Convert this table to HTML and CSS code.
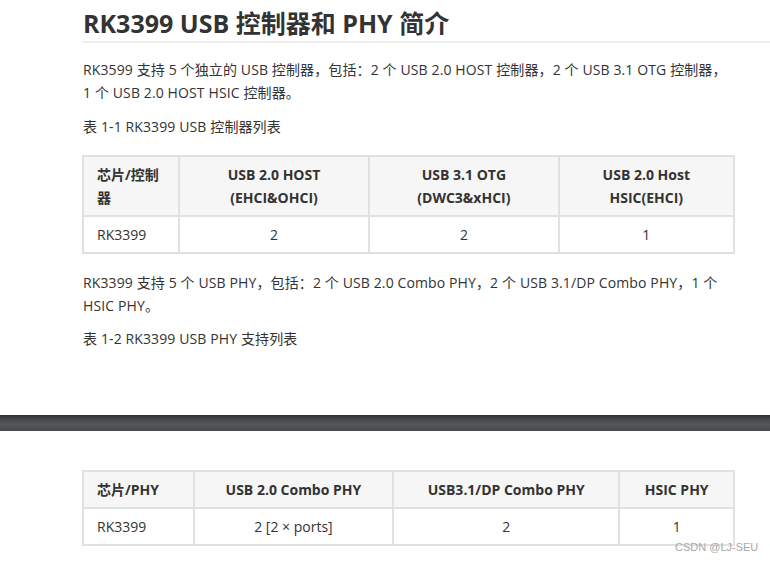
FILE: index.html
```html
<!DOCTYPE html>
<html lang="zh-CN">
<head>
<meta charset="utf-8">
<title>RK3399 USB 控制器和 PHY 简介</title>
<link rel="stylesheet" href="styles.css">
</head>
<body>
<main class="page">
  <section class="part part-top">
    <h1 class="title">RK3399 USB 控制器和 PHY 简介</h1>
    <p class="text first">RK3599 支持 5 个独立的 USB 控制器，包括：2 个 USB 2.0 HOST 控制器，2 个 USB 3.1 OTG 控制器，<br>1 个 USB 2.0 HOST HSIC 控制器。</p>
    <p class="text caption">表 1-1 RK3399 USB 控制器列表</p>
    <table class="grid">
      <colgroup>
        <col class="c1-a"><col class="c1-b"><col class="c1-c"><col class="c1-d">
      </colgroup>
      <thead>
        <tr>
          <th class="left">芯片/控制<br>器</th>
          <th>USB 2.0 HOST<br>(EHCI&amp;OHCI)</th>
          <th>USB 3.1 OTG<br>(DWC3&amp;xHCI)</th>
          <th>USB 2.0 Host<br>HSIC(EHCI)</th>
        </tr>
      </thead>
      <tbody>
        <tr>
          <td class="left">RK3399</td>
          <td>2</td>
          <td>2</td>
          <td>1</td>
        </tr>
      </tbody>
    </table>
    <p class="text after-table">RK3399 支持 5 个 USB PHY，包括：2 个 USB 2.0 Combo PHY，2 个 USB 3.1/DP Combo PHY，1 个 HSIC PHY。</p>
    <p class="text caption caption-last">表 1-2 RK3399 USB PHY 支持列表</p>
  </section>
  <div class="divider"></div>
  <section class="part part-bottom">
    <table class="grid">
      <colgroup>
        <col class="c2-a"><col class="c2-b"><col class="c2-c"><col class="c2-d">
      </colgroup>
      <thead>
        <tr>
          <th class="left">芯片/PHY</th>
          <th>USB 2.0 Combo PHY</th>
          <th>USB3.1/DP Combo PHY</th>
          <th>HSIC PHY</th>
        </tr>
      </thead>
      <tbody>
        <tr>
          <td class="left">RK3399</td>
          <td>2 [2 × ports]</td>
          <td>2</td>
          <td>1</td>
        </tr>
      </tbody>
    </table>
  </section>
  <div class="watermark">CSDN @LJ-SEU</div>
</main>
</body>
</html>
```
FILE: styles.css
```css
html, body {
  margin: 0;
  padding: 0;
  background: #ffffff;
}

.page {
  position: relative;
  width: 770px;
  height: 562px;
  overflow: hidden;
  font-family: "Open Sans", "Noto Sans CJK SC", sans-serif;
  color: #333333;
}

.part {
  padding-left: 82px;
}

.part-top {
  padding-top: 8px;
}

.title {
  margin: 0;
  padding: 0 0 3px 1px;
  font-size: 25px;
  line-height: 30px;
  font-weight: 700;
  color: #333333;
  border-bottom: 2px solid #eeeeee;
}

.text {
  width: 652px;
  margin: 0;
  padding-left: 1px;
  font-size: 14px;
  line-height: 23px;
  letter-spacing: 0.12px;
}

.first {
  margin-top: 15px;
}

.caption {
  margin-top: 11px;
}

.caption-last {
  margin-top: 10px;
}

.after-table {
  margin-top: 17px;
}

.grid {
  width: 653px;
  border-collapse: collapse;
  font-size: 14px;
  line-height: 23px;
  color: #333333;
}

.part-top .grid {
  margin-top: 17px;
}

.grid th,
.grid td {
  border: 2px solid #dfe2e5;
  padding: 6px 13px;
  text-align: center;
  vertical-align: middle;
}

.grid th {
  background: #f6f6f6;
  font-weight: 700;
}

.grid .left {
  text-align: left;
}

.c1-a { width: 96px; }
.c1-b { width: 191px; }
.c1-c { width: 190px; }
.c1-d { width: 176px; }

.c2-a { width: 111px; }
.c2-b { width: 200px; }
.c2-c { width: 227px; }
.c2-d { width: 115px; }

.divider {
  height: 16px;
  margin-top: 65px;
  background: linear-gradient(to bottom, #2c2f32 0%, #474b4e 30%, #53575a 60%, #45494c 100%);
}

.part-bottom {
  padding-top: 39px;
}

.watermark {
  position: absolute;
  left: 675px;
  top: 541px;
  font-family: "Liberation Sans", Arial, sans-serif;
  font-size: 11px;
  line-height: 13px;
  color: #a8a8a8;
}
```
